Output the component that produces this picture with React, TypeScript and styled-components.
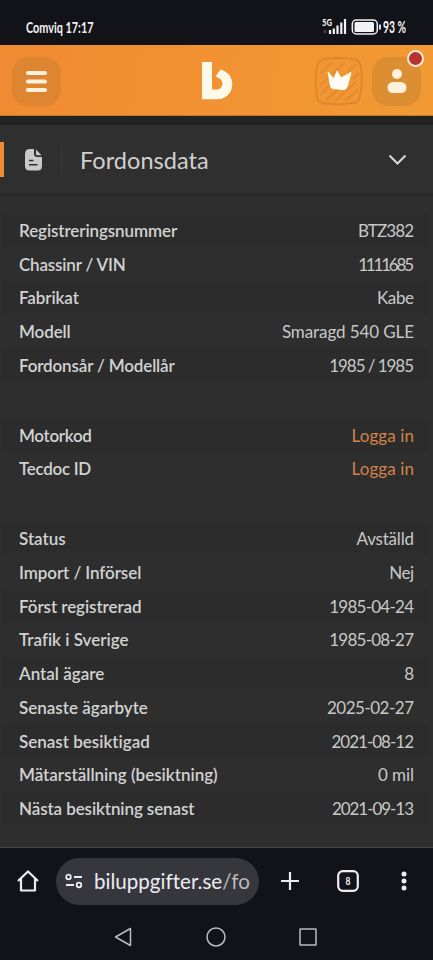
import React from "react";
import styled, { createGlobalStyle } from "styled-components";

const Global = createGlobalStyle`
  * { box-sizing: border-box; }
  body { margin: 0; background: #2e2e2e; font-family: Lato, "Open Sans", sans-serif; font-variant-ligatures: none; }
  button { border: 0; padding: 0; background: none; color: inherit; font: inherit; }
`;
const Phone = styled.div`
  width: 433px; height: 960px; overflow: hidden; display: flex; flex-direction: column; background: #2e2e2e;
`;
const StatusBar = styled.div`
  height: 45px; flex: none; background: #121318; color: #f2f2f4; display: flex; align-items: center;
  justify-content: space-between; padding: 9px 27px 0 26px;
`;
const Narrow = styled.span<{ $scale: number; $w: number; $size: number; $weight?: number }>`
  display: inline-block; white-space: nowrap; width: ${p => p.$w}px; line-height: 20px;
  font-size: ${p => p.$size}px; font-weight: ${p => p.$weight ?? 700};
  transform: scaleX(${p => p.$scale}); transform-origin: left center;
`;
const StatusIcons = styled.div`display: flex; align-items: center; gap: 1px;`;
const Header = styled.header`
  height: 71px; flex: none; display: flex; align-items: center; padding: 2px 12px 0;
  background: linear-gradient(100deg, #f18a32, #f29a33); border-bottom: 1px solid #c07a2c;
`;
const Side = styled.div<{ $end?: boolean }>`
  flex: 1; display: flex; gap: 9px; justify-content: ${p => (p.$end ? "flex-end" : "flex-start")};
`;
const Tile = styled.button<{ $bg?: string }>`
  position: relative; width: 49px; height: 49px; border-radius: 16px; display: flex; align-items: center;
  justify-content: center; background: ${p => p.$bg ?? "transparent"};
`;
const Alert = styled.span`
  position: absolute; right: -3px; top: -7px; width: 17px; height: 17px; border-radius: 50%;
  background: #b83232; border: 2px solid #fae9d8;
`;
const Strip = styled.div`height: 9px; flex: none; background: #232421;`;
const Section = styled.button`
  height: 71px; flex: none; display: flex; align-items: center; color: #d0d0d0; background: #2f2f2f;
  border-bottom: 2px solid #292929; padding-right: 26px;
`;
const Marker = styled.span`width: 4px; height: 35px; background: #f08b36; margin-right: 21px;`;
const Divider = styled.span`width: 1px; height: 30px; background: #393939; margin: 0 18px 0 19px;`;
const Title = styled.span`flex: 1; text-align: left; font-size: 23.5px; letter-spacing: 0.05px;`;
const Content = styled.main`flex: 1; min-height: 0; overflow: hidden; padding: 17.4px 5px 0 2px;`;
const Group = styled.dl`margin: 0 0 36px;`;
const Row = styled.div`
  height: 33.75px; display: flex; align-items: center; justify-content: space-between;
  padding: 0 14px 0 17px; font-size: 17px;
  &:nth-child(odd) { background: #2c2c2c; }
`;
const Label = styled.dt<{ $ls: number }>`color: #d2d2d2; font-weight: 600; letter-spacing: ${p => p.$ls}px;`;
const Value = styled.dd<{ $link?: boolean; $ls: number }>`
  margin: 0 ${p => -p.$ls}px 0 0; color: ${p => (p.$link ? "#d38347" : "#c8c8c8")};
  letter-spacing: ${p => p.$ls}px;
`;
const Browser = styled.div`
  height: 66px; flex: none; background: #121318; border-top: 1px solid #444548; display: flex;
  align-items: center; padding: 1px 0 0 17px; color: #ececf2;
`;
const Address = styled.div`
  width: 203px; height: 47px; border-radius: 24px; background: #36373c; display: flex; align-items: center;
  padding-left: 9px; gap: 11px; margin: 0 21px 0 17px; overflow: hidden; flex: none;
`;
const Actions = styled.div`display: flex; align-items: center; gap: 37px;`;
const Faded = styled.span`color: #b9babf; font-weight: 400;`;
const Nav = styled.nav`
  height: 47px; flex: none; background: #121318; display: flex; justify-content: center; align-items: center;
  gap: 72px; padding-right: 1px;
`;

type Item = { label: string; value: string; link?: boolean; ls?: number; vs?: number };
const groups: Item[][] = [
  [
    { label: "Registreringsnummer", value: "BTZ382", ls: -0.1, vs: -0.9 },
    { label: "Chassinr / VIN", value: "1111685", ls: -0.18, vs: -2.2 },
    { label: "Fabrikat", value: "Kabe", ls: -0.1, vs: -0.4 },
    { label: "Modell", value: "Smaragd 540 GLE", ls: -0.1, vs: -0.1 },
    { label: "Fordonsår / Modellår", value: "1985 / 1985", ls: -0.15, vs: -1.05 },
  ],
  [
    { label: "Motorkod", value: "Logga in", link: true, ls: -0.3, vs: 0.1 },
    { label: "Tecdoc ID", value: "Logga in", link: true, ls: -0.3, vs: 0.1 },
  ],
  [
    { label: "Status", value: "Avställd", vs: -0.2 },
    { label: "Import / Införsel", value: "Nej", ls: -0.07, vs: -0.5 },
    { label: "Först registrerad", value: "1985-04-24", ls: -0.07, vs: -0.75 },
    { label: "Trafik i Sverige", value: "1985-08-27", vs: -0.75 },
    { label: "Antal ägare", value: "8" },
    { label: "Senaste ägarbyte", value: "2025-02-27", vs: -0.5 },
    { label: "Senast besiktigad", value: "2021-08-12", vs: -1 },
    { label: "Mätarställning (besiktning)", value: "0 mil", vs: -0.1 },
    { label: "Nästa besiktning senast", value: "2021-09-13", ls: -0.1, vs: -1.05 },
  ],
];

export default function App() {
  return (
    <Phone>
      <Global />
      <StatusBar>
        <Narrow $scale={0.7} $w={68} $size={15.5}>Comviq 17:17</Narrow>
        <StatusIcons>
          <svg width="61" height="18" viewBox="0 0 61 18" fill="none">
            <text x="1" y="8" fontSize="8.500" fontWeight="900" fill="#f2f2f4" textLength="10" lengthAdjust="spacingAndGlyphs">5G</text>
            <path d="M9 16v-4M12.800 16v-5.500M16.500 16V7.500M20.300 16V4.500M24 16V1" stroke="#f2f2f4" strokeWidth="2.200" />
            <circle cx="4" cy="13.500" r="1.500" fill="#44454a" />
            <rect x="31.300" y="2" width="25" height="14" rx="4" stroke="#f2f2f4" strokeWidth="1.500" />
            <rect x="33.500" y="4" width="19.500" height="10" rx="1.500" fill="#f2f2f4" />
            <path d="M59 6.500v5" stroke="#f2f2f4" strokeWidth="1.800" />
          </svg>
          <Narrow $scale={0.61} $w={23} $size={17}>93 %</Narrow>
        </StatusIcons>
      </StatusBar>
      <Header>
        <Side>
          <Tile $bg="#dd8531" aria-label="Meny">
            <svg width="23" height="24" viewBox="0 0 23 24">
              <path d="M3 4h17M3 12.500h17M3 21h17" stroke="#fff1dc" strokeWidth="4.200" strokeLinecap="round" />
            </svg>
          </Tile>
        </Side>
        <svg width="32" height="40" viewBox="0 0 32 40">
          <path d="M1 1H11V28.500H15.500C22 28.500 23.500 20.500 18.500 17.500L14.500 15.500L19.500 8.500C27 11 31.300 16 31.300 23C31.300 32 25 38.300 16 38.300H1Z" fill="#fff9ec" />
        </svg>
        <Side $end>
          <Tile aria-label="Premium">
            <svg width="49" height="49" viewBox="0 0 49 49" fill="none">
              <path d="M11 2Q25 0 39 2Q47 3 47 11Q49 25 46 39Q45 46 38 46Q24 49 9 46Q2 45 3 37Q0 24 3 10Q4 3 11 2Z" stroke="#dd882f" strokeWidth="1.800" />
              <path d="M7 16L18 5M7 28L26 10L31 5M7 38L17 26M12 43L24 33M20 45L42 25M31 44L44 33M34 14L43 7M39 21L45 16" stroke="#e38d32" strokeWidth="2.300" />
              <path d="M14 15L20 22L23 14L27 21L37 15.500L33 30Q32 33 29 32.500L19 31.500Q17 31 16.500 29Z" fill="#fffdf3" stroke="#fffdf3" strokeWidth="1" strokeLinejoin="round" />
            </svg>
          </Tile>
          <Tile $bg="#dc8e32" aria-label="Konto">
            <svg width="22" height="26" viewBox="0 0 22 26" fill="#fff1dc">
              <circle cx="11" cy="6" r="5" /><rect x="1.500" y="14" width="19" height="11" rx="5.500" />
            </svg>
            <Alert />
          </Tile>
        </Side>
      </Header>
      <Strip />
      <Section>
        <Marker />
        <svg width="17" height="22" viewBox="0 0 17 22">
          <path d="M5 0H9V5Q9 8 12 8H17V17Q17 21.500 12.500 21.500H4.500Q0 21.500 0 17V5Q0 0 5 0ZM11 0.500L16.500 6.300H12Q11 6.300 11 5Z" fill="#c9c9c9" />
          <path d="M4 11.500H8.500M4 15.700H12.500" stroke="#2f2f2f" strokeWidth="1.500" />
        </svg>
        <Divider />
        <Title>Fordonsdata</Title>
        <svg width="19" height="12" viewBox="0 0 19 12" fill="none">
          <path d="M1.500 1.500L9.500 9.500L17.500 1.500" stroke="#d8d8d8" strokeWidth="2" />
        </svg>
      </Section>
      <Content>
        {groups.map((group, i) => (
          <Group key={i}>
            {group.map(({ label, value, link, ls = 0, vs = 0 }) => (
              <Row key={label}>
                <Label $ls={ls}>{label}</Label>
                <Value $link={link} $ls={vs}>{value}</Value>
              </Row>
            ))}
          </Group>
        ))}
      </Content>
      <Browser>
        <svg width="22" height="22" viewBox="0 0 22 22" fill="none" stroke="#ececf2" strokeWidth="2.200">
          <path d="M1 11L11 1.500L21 11M4 8.500V20.500H18V8.500" strokeLinejoin="round" />
        </svg>
        <Address>
          <svg width="18" height="16" viewBox="0 0 18 16" fill="none" stroke="#ececf2" strokeWidth="1.800">
            <circle cx="3.500" cy="4" r="2.300" /><path d="M9 4h8M1 12h8" /><circle cx="14" cy="12" r="2.300" />
          </svg>
          <Narrow $scale={0.98} $w={160} $size={21} $weight={400}>biluppgifter.se<Faded>/fo</Faded></Narrow>
        </Address>
        <Actions>
          <svg width="20" height="20" viewBox="0 0 20 20"><path d="M10 1v18M1 10h18" stroke="#ececf2" strokeWidth="2.200" /></svg>
          <svg width="22" height="22" viewBox="0 0 22 22" fill="none" stroke="#ececf2">
            <rect x="1.200" y="1.200" width="19.600" height="19.600" rx="4.500" strokeWidth="2.200" />
            <text x="8.500" y="15" fontSize="11" fontWeight="700" fill="#ececf2" stroke="none" textLength="5" lengthAdjust="spacingAndGlyphs">8</text>
          </svg>
          <svg width="16" height="20" viewBox="0 0 16 20" fill="#ececf2"><circle cx="8" cy="3" r="2.500" /><circle cx="8" cy="10" r="2.500" /><circle cx="8" cy="17" r="2.500" /></svg>
        </Actions>
      </Browser>
      <Nav>
        <svg width="20" height="20" viewBox="0 0 20 20" fill="none" stroke="#bcbcc0" strokeWidth="1.500"><path d="M16.500 1.500V18.500L1.500 10Z" strokeLinejoin="round" /></svg>
        <svg width="20" height="20" viewBox="0 0 20 20" fill="none" stroke="#bcbcc0" strokeWidth="1.500"><circle cx="10" cy="10" r="9" /></svg>
        <svg width="20" height="20" viewBox="0 0 20 20" fill="none" stroke="#bcbcc0" strokeWidth="1.500"><rect x="2" y="2" width="16" height="16" rx="0.500" /></svg>
      </Nav>
    </Phone>
  );
}
